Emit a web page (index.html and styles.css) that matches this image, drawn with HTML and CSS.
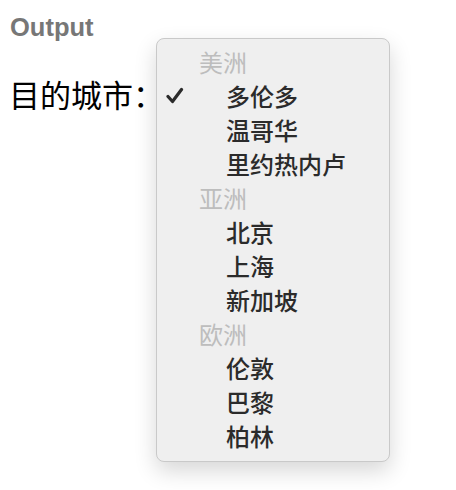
FILE: index.html
```html
<!DOCTYPE html>
<html lang="zh">
<head>
<meta charset="utf-8">
<link rel="stylesheet" href="styles.css">
</head>
<body>
<div class="page">
  <div class="heading">Output</div>
  <div class="field">
    <span class="label">目的城市：</span>
  </div>
</div>
<div class="menu">
  <div class="group">美洲</div>
  <div class="item selected"><svg class="check" width="18" height="18" viewBox="0 0 18 18"><path d="M2 9.5 L6.5 14.5 L15.5 2.5" fill="none" stroke="#2b2b2b" stroke-width="3.2" stroke-linecap="round" stroke-linejoin="round"/></svg>多伦多</div>
  <div class="item">温哥华</div>
  <div class="item">里约热内卢</div>
  <div class="group">亚洲</div>
  <div class="item">北京</div>
  <div class="item">上海</div>
  <div class="item">新加坡</div>
  <div class="group">欧洲</div>
  <div class="item">伦敦</div>
  <div class="item">巴黎</div>
  <div class="item">柏林</div>
</div>
</body>
</html>
```
FILE: styles.css
```css
html, body {
  margin: 0;
  padding: 0;
  background: #ffffff;
}
body {
  width: 456px;
  height: 490px;
  position: relative;
  font-family: "Liberation Sans", "Noto Sans CJK SC", sans-serif;
}
.page {
  padding: 11px 10px 0 10px;
}
.heading {
  font-family: "Liberation Sans", Arial, sans-serif;
  font-weight: bold;
  font-size: 25.5px;
  line-height: 32px;
  color: #777777;
}
.field {
  margin-top: 34px;
  display: flex;
  align-items: center;
}
.label {
  font-family: "Noto Sans CJK SC", sans-serif;
  font-size: 31px;
  line-height: 34px;
  color: #000000;
  margin-left: -1px;
}
.menu {
  position: absolute;
  left: 156px;
  top: 38px;
  width: 232px;
  padding: 6px 0 8px 0;
  background: #efefef;
  border: 1px solid #c9c9c9;
  border-radius: 8px;
  box-shadow: 0 9px 22px rgba(0, 0, 0, 0.16);
  font-family: "Noto Sans CJK SC", sans-serif;
  font-size: 24px;
}
.group {
  height: 34px;
  line-height: 34px;
  padding-left: 42px;
  color: #bdbdbd;
}
.item {
  height: 34px;
  line-height: 34px;
  padding-left: 69px;
  color: #2b2b2b;
  font-weight: 500;
  position: relative;
}
.check {
  position: absolute;
  left: 9px;
  top: 8px;
}
```
